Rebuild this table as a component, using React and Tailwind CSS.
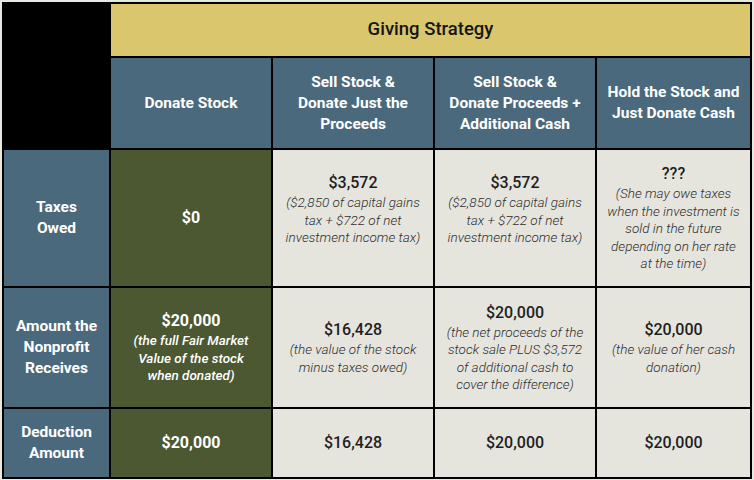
import React from "react";

const font = { fontFamily: "Roboto, 'Liberation Sans', sans-serif" };

function Cream({ value, note, pad }) {
  return (
    <div className="bg-[#e5e5de] flex flex-col items-center justify-center text-center px-1 whitespace-nowrap">
      <div className="text-[16px] font-medium text-[#1e1e1e] leading-[22px]">{value}</div>
      {note && (
        <div className="text-[13.5px] italic font-light text-[#2e2e2e] leading-[17.5px]">{note}</div>
      )}
      {pad && <div className="h-[17.5px]" />}
    </div>
  );
}

function Green({ value, note }) {
  return (
    <div className="bg-[#4b5831] flex flex-col items-center justify-center text-center px-1 text-white whitespace-nowrap">
      <div className="text-[16px] font-bold leading-[22px]">{value}</div>
      {note && (
        <div className="text-[13.5px] italic font-medium leading-[17.5px]">{note}</div>
      )}
    </div>
  );
}

function Head({ children }) {
  return (
    <div className="bg-[#4b697c] flex items-center justify-center text-center text-white font-bold text-[15.5px] leading-[21px] px-1 whitespace-nowrap">
      <div>{children}</div>
    </div>
  );
}

export default function App() {
  return (
    <div className="w-[754px] h-[480px] bg-[#e8e8e2] p-[2px] pb-[1px]" style={font}>
      <div className="grid grid-cols-[105px_160px_160px_160px_153px] grid-rows-[52px_90px_136px_119px_68px] gap-[2px] bg-black p-[2px]">
        <div className="row-span-2 bg-black" />
        <div className="col-span-4 bg-[#dac66c] flex items-center justify-center text-[18.5px] font-medium text-[#151515]">
          Giving Strategy
        </div>

        <Head>Donate Stock</Head>
        <Head>Sell Stock &amp;<br />Donate Just the<br />Proceeds</Head>
        <Head>Sell Stock &amp;<br />Donate Proceeds +<br />Additional Cash</Head>
        <Head>Hold the Stock and<br />Just Donate Cash</Head>

        <Head>Taxes<br />Owed</Head>
        <Green value="$0" />
        <Cream
          value="$3,572"
          pad
          note={<>($2,850 of capital gains<br />tax + $722 of net<br />investment income tax)</>}
        />
        <Cream
          value="$3,572"
          pad
          note={<>($2,850 of capital gains<br />tax + $722 of net<br />investment income tax)</>}
        />
        <Cream
          value="???"
          note={<>(She may owe taxes<br />when the investment is<br />sold in the future<br />depending on her rate<br />at the time)</>}
        />

        <Head>Amount the<br />Nonprofit<br />Receives</Head>
        <Green
          value="$20,000"
          note={<>(the full Fair Market<br />Value of the stock<br />when donated)</>}
        />
        <Cream value="$16,428" note={<>(the value of the stock<br />minus taxes owed)</>} />
        <Cream
          value="$20,000"
          note={<>(the net proceeds of the<br />stock sale PLUS $3,572<br />of additional cash to<br />cover the difference)</>}
        />
        <Cream value="$20,000" note={<>(the value of her cash<br />donation)</>} />

        <Head>Deduction<br />Amount</Head>
        <Green value="$20,000" />
        <Cream value="$16,428" />
        <Cream value="$20,000" />
        <Cream value="$20,000" />
      </div>
    </div>
  );
}
